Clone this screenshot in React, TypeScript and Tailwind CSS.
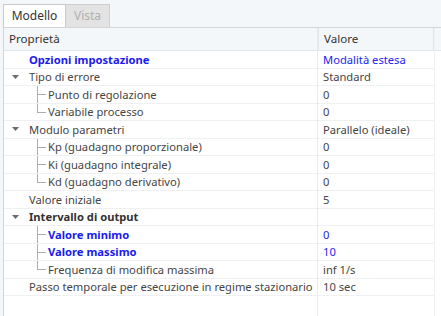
import React from "react";

type Row = {
  label: string;
  value: string;
  level: 0 | 1;
  expander?: boolean;
  last?: boolean;
  bold?: boolean;
  blue?: boolean;
  valueBlue?: boolean;
};

const rows: Row[] = [
  { label: "Opzioni impostazione", value: "Modalità estesa", level: 0, bold: true, blue: true, valueBlue: true },
  { label: "Tipo di errore", value: "Standard", level: 0, expander: true },
  { label: "Punto di regolazione", value: "0", level: 1 },
  { label: "Variabile processo", value: "0", level: 1, last: true },
  { label: "Modulo parametri", value: "Parallelo (ideale)", level: 0, expander: true },
  { label: "Kp (guadagno proporzionale)", value: "0", level: 1 },
  { label: "Ki (guadagno integrale)", value: "0", level: 1 },
  { label: "Kd (guadagno derivativo)", value: "0", level: 1, last: true },
  { label: "Valore iniziale", value: "5", level: 0 },
  { label: "Intervallo di output", value: "", level: 0, expander: true, bold: true },
  { label: "Valore minimo", value: "0", level: 1, bold: true, blue: true, valueBlue: true },
  { label: "Valore massimo", value: "10", level: 1, bold: true, blue: true, valueBlue: true },
  { label: "Frequenza di modifica massima", value: "inf 1/s", level: 1, last: true },
  { label: "Passo temporale per esecuzione in regime stazionario", value: "10 sec", level: 0 },
];

function Caret() {
  return (
    <svg width="7" height="4" viewBox="0 0 7 4" className="block">
      <path d="M0 0h7L3.5 4z" fill="#6b6b6b" />
    </svg>
  );
}

function Connector({ last }: { last?: boolean }) {
  return (
    <span className="relative w-[11px] h-full shrink-0">
      <span className={`absolute left-0 top-0 w-px bg-[#adadad] ${last ? "h-1/2" : "h-full"}`} />
      <span className="absolute left-0 top-1/2 w-[9px] h-px bg-[#adadad]" />
    </span>
  );
}

export default function App() {
  return (
    <div
      className="w-[441px] h-[316px] flex flex-col bg-[#f4f7f9] text-[11.2px] text-[#454545] overflow-hidden"
      style={{ fontFamily: '"Noto Sans", "Open Sans", sans-serif' }}
    >
      {/* Tabs */}
      <div className="h-[27px] flex items-end pl-[3px] shrink-0 text-[12px]">
        <div className="h-[23px] w-[63px] flex items-center justify-center bg-white border border-b-0 border-[#c9c9c9] text-[#333]">
          Modello
        </div>
        <div className="h-[23px] w-[44px] flex items-center justify-center bg-[#e3e3e3] border border-b-0 border-l-0 border-[#cfcfcf] text-[#b0b0b0]">
          Vista
        </div>
      </div>

      {/* Property grid */}
      <div className="flex-1 ml-[3px] bg-white border-l border-t border-[#d4d4d4] relative">
        <div className="absolute left-[313px] top-0 bottom-0 w-px bg-[#e8ebee]" />
        <div className="absolute left-[430px] top-0 bottom-0 w-px bg-[#eef0f2]" />
        <div className="flex h-[23px] bg-[#f4f7f9] border-b border-[#e2e5e8] text-[11.6px]">
          <div className="w-[314px] flex items-center pl-[5px] text-[#333]">Proprietà</div>
          <div className="w-[116px] flex items-center pl-[5px] border-l border-r border-[#e2e5e8] text-[#333]">
            Valore
          </div>
        </div>
        {rows.map((r) => (
          <div key={r.label} className="flex h-[17.5px] border-b border-[#eef0f2] w-[430px]">
            <div className="w-[314px] flex items-center h-full">
              {r.level === 0 ? (
                <span className="w-[25px] shrink-0 flex justify-end pr-[10px]">{r.expander && <Caret />}</span>
              ) : (
                <>
                  <span className="w-[33px] shrink-0" />
                  <Connector last={r.last} />
                </>
              )}
              <span
                className={`whitespace-nowrap leading-none ${r.bold ? "font-bold" : ""} ${
                  r.blue ? "text-[#1a1aee]" : r.bold ? "text-[#333]" : ""
                }`}
              >
                {r.label}
              </span>
            </div>
            <div
              className={`w-[116px] flex items-center pl-[5px] whitespace-nowrap leading-none ${
                r.valueBlue ? "text-[#2424f0]" : ""
              }`}
            >
              {r.value}
            </div>
          </div>
        ))}
      </div>
    </div>
  );
}
